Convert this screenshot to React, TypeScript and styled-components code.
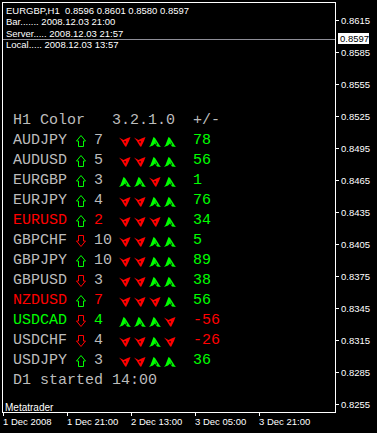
import React from "react";
import styled, { createGlobalStyle } from "styled-components";

const GlobalStyle = createGlobalStyle`
  html, body { margin: 0; padding: 0; background: #000; }
  body {
    width: 377px;
    height: 433px;
    overflow: hidden;
    font-family: "Liberation Sans", Arial, sans-serif;
  }
`;

const GRAY = "#bcbcbc";
const RED = "#ff0000";
const LIME = "#00ff00";

const Terminal = styled.div`
  display: grid;
  grid-template-columns: 334px 1fr;
  grid-template-rows: 411px 20px;
  padding: 2px 0 0 2px;
  width: 377px;
  height: 433px;
  box-sizing: border-box;
  background: #000;
`;

const Chart = styled.div`
  position: relative;
  border: 1px solid #fff;
  box-sizing: border-box;
  display: flex;
  flex-direction: column;
  overflow: hidden;
`;

const Info = styled.div`
  padding: 2px 0 0 3px;
  color: #fff;
  font-size: 9.5px;
`;

const InfoLine = styled.div<{ $gap?: boolean }>`
  height: 11px;
  line-height: 11px;
  white-space: pre;
  margin-top: ${(p) => (p.$gap ? 1 : 0)}px;
`;

const PriceLine = styled.div`
  position: absolute;
  top: 36px;
  left: 0;
  right: 0;
  height: 1px;
  background: #8e8e98;
`;

const Table = styled.div`
  margin-top: 61px;
  padding-left: 10px;
  font-family: "Liberation Mono", "Courier New", monospace;
  font-size: 15px;
  color: ${GRAY};
`;

const TextRow = styled.div`
  height: 20px;
  line-height: 20px;
  white-space: pre;
`;

const Row = styled.div`
  display: grid;
  grid-template-columns: 63px 18px 25px 74px auto;
  align-items: center;
  height: 20px;
  line-height: 20px;
`;

const Cell = styled.span<{ $color: string }>`
  color: ${(p) => p.$color};
  white-space: pre;
`;

const Trend = styled.div`
  display: flex;
  gap: 3px;
  align-items: center;
  padding-top: 1px;
`;

const IconBox = styled.svg`
  display: block;
`;

const Brand = styled.div`
  margin-top: auto;
  padding-left: 2px;
  font-size: 10px;
  line-height: 10px;
  height: 9px;
  color: #fff;
`;

const Axis = styled.div`
  position: relative;
  padding-top: 2px;
  display: flex;
  flex-direction: column;
`;

const AxisRow = styled.div`
  height: 32px;
  flex: none;
  display: flex;
  align-items: center;
  font-size: 9.5px;
  color: #fff;
`;

const Tick = styled.span`
  width: 3px;
  height: 1px;
  background: #fff;
  margin-right: 2px;
`;

const PriceBox = styled.div`
  position: absolute;
  top: 31px;
  left: 2px;
  width: 31px;
  height: 11px;
  line-height: 11px;
  padding-left: 2px;
  box-sizing: border-box;
  background: #fff;
  color: #000;
  font-size: 9.5px;
`;

const TimeAxis = styled.div`
  grid-column: 1 / -1;
  display: flex;
  padding-left: 1px;
`;

const TimeCell = styled.div`
  width: 64px;
  flex: none;
  display: flex;
  flex-direction: column;
`;

const TimeTick = styled.span`
  width: 1px;
  height: 3px;
  background: #fff;
`;

const TimeLabel = styled.span`
  font-size: 9.5px;
  line-height: 11px;
  color: #fff;
  white-space: nowrap;
`;

const BigArrow = ({ up, color }: { up: boolean; color: string }) => (
  <IconBox width="10" height="12" viewBox="0 0 10 12">
    <path
      d="M5 0.5 L9.5 6 L7.5 6 L7.5 11.5 L2.5 11.5 L2.5 6 L0.5 6 Z"
      fill="none"
      stroke={color}
      strokeWidth="1"
      transform={up ? undefined : "rotate(180 5 6)"}
    />
  </IconBox>
);

const Head = ({ up }: { up: boolean }) =>
  up ? (
    <IconBox width="12" height="10" viewBox="0 0 12 10">
      <path d="M4.5 0 L6 1 L11 9 L12 10 L8 9.5 L6 6.5 L4 8.5 L0 10 L1.5 8 Z" fill={LIME} />
      <path d="M6.5 4 L8.3 8 L7.2 7.6 Z" fill="#000" />
    </IconBox>
  ) : (
    <IconBox width="12" height="10" viewBox="0 0 12 10">
      <path d="M0 0.5 L4.5 3 L7.5 1.5 L11.5 0 L10 4 L7 10 L5.5 8.5 L2.5 3.5 Z" fill={RED} />
      <path d="M5 4.5 L6.8 4 L6.3 6.5 Z" fill="#000" />
    </IconBox>
  );

type Pair = {
  name: string;
  nameColor: string;
  up: boolean;
  count: number;
  trend: string;
  value: number;
};

const pairs: Pair[] = [
  { name: "AUDJPY", nameColor: GRAY, up: true, count: 7, trend: "VVAA", value: 78 },
  { name: "AUDUSD", nameColor: GRAY, up: true, count: 5, trend: "VVAA", value: 56 },
  { name: "EURGBP", nameColor: GRAY, up: true, count: 3, trend: "AAVA", value: 1 },
  { name: "EURJPY", nameColor: GRAY, up: true, count: 4, trend: "VVAA", value: 76 },
  { name: "EURUSD", nameColor: RED, up: true, count: 2, trend: "VVVA", value: 34 },
  { name: "GBPCHF", nameColor: GRAY, up: false, count: 10, trend: "VVAA", value: 5 },
  { name: "GBPJPY", nameColor: GRAY, up: true, count: 10, trend: "VVAA", value: 89 },
  { name: "GBPUSD", nameColor: GRAY, up: false, count: 3, trend: "VVAA", value: 38 },
  { name: "NZDUSD", nameColor: RED, up: true, count: 7, trend: "VVVA", value: 56 },
  { name: "USDCAD", nameColor: LIME, up: false, count: 4, trend: "AAAV", value: -56 },
  { name: "USDCHF", nameColor: GRAY, up: false, count: 4, trend: "VVAV", value: -26 },
  { name: "USDJPY", nameColor: GRAY, up: true, count: 3, trend: "VVAA", value: 36 },
];

const prices = [
  "0.8615", "0.8585", "0.8555", "0.8525", "0.8495", "0.8465", "0.8435",
  "0.8405", "0.8375", "0.8345", "0.8315", "0.8285", "0.8255",
];

const times = ["1 Dec 2008", "1 Dec 21:00", "2 Dec 13:00", "3 Dec 05:00", "3 Dec 21:00"];

export default function App() {
  return (
    <>
      <GlobalStyle />
      <Terminal>
        <Chart>
          <Info>
            <InfoLine>{"EURGBP,H1  0.8596 0.8601 0.8580 0.8597"}</InfoLine>
            <InfoLine>{"Bar....... 2008.12.03 21:00"}</InfoLine>
            <InfoLine $gap>{"Server..... 2008.12.03 21:57"}</InfoLine>
            <InfoLine>{"Local..... 2008.12.03 13:57"}</InfoLine>
          </Info>
          <PriceLine />
          <Table>
            <TextRow>{"H1 Color   3.2.1.0  +/-"}</TextRow>
            {pairs.map((p) => (
              <Row key={p.name}>
                <Cell $color={p.nameColor}>{p.name}</Cell>
                <BigArrow up={p.up} color={p.up ? LIME : RED} />
                <Cell $color={p.nameColor}>{p.count}</Cell>
                <Trend>
                  {p.trend.split("").map((t, i) => (
                    <Head key={i} up={t === "A"} />
                  ))}
                </Trend>
                <Cell $color={p.value >= 0 ? LIME : RED}>{p.value}</Cell>
              </Row>
            ))}
            <TextRow>{"D1 started 14:00"}</TextRow>
          </Table>
          <Brand>Metatrader</Brand>
        </Chart>
        <Axis>
          {prices.map((v) => (
            <AxisRow key={v}>
              <Tick />
              {v}
            </AxisRow>
          ))}
          <PriceBox>0.8597</PriceBox>
        </Axis>
        <TimeAxis>
          {times.map((t) => (
            <TimeCell key={t}>
              <TimeTick />
              <TimeLabel>{t}</TimeLabel>
            </TimeCell>
          ))}
        </TimeAxis>
      </Terminal>
    </>
  );
}
